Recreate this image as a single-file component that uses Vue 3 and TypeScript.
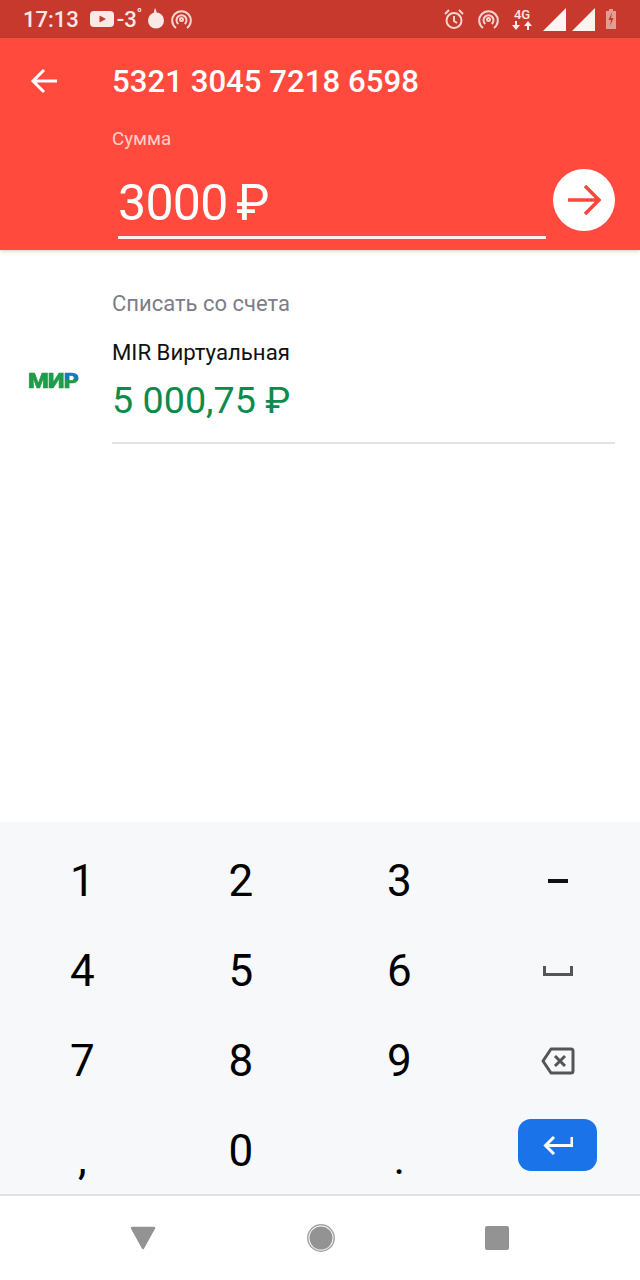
<script setup lang="ts">
const keys = ["1", "2", "3", "–", "4", "5", "6", "space", "7", "8", "9", "back", ",", "0", ".", "enter"];
</script>

<template>
  <div class="screen">
    <div class="status">
      <div class="status-left">
        <span class="time">17:13</span>
        <svg class="yt" width="24" height="16" viewBox="0 0 24 16">
          <rect width="24" height="16" rx="4" fill="#fbe9e7" />
          <path d="M9.5 4.5 16 8l-6.500 3.500z" fill="#c6392c" />
        </svg>
        <span class="temp">-3<sup>°</sup></span>
        <svg class="drop" width="18" height="22" viewBox="0 0 18 22">
          <path d="M8 1c1 2 1.500 3 1.600 5H6.800C7 4 7.500 3 8 1z" fill="#fbe9e7" />
          <circle cx="9" cy="13.500" r="8" fill="#fbe9e7" />
        </svg>
        <svg width="21" height="21" viewBox="0 0 21 21" fill="none" stroke="#f6d5d1" stroke-width="2">
          <path d="M5 19a9.300 9.300 0 1 1 11 0" />
          <path d="M7.300 15a5 5 0 1 1 6.400 0" />
          <circle cx="10.500" cy="10.500" r="1.500" />
        </svg>
      </div>
      <div class="status-right">
        <svg width="22" height="22" viewBox="0 0 22 22" fill="none" stroke="#f6d5d1" stroke-width="2">
          <circle cx="11" cy="12.500" r="7.500" />
          <path d="M11 8v5l3 2M2 6l4-4M20 6l-4-4" />
        </svg>
        <svg class="gap-icon" width="21" height="21" viewBox="0 0 21 21" fill="none" stroke="#f6d5d1" stroke-width="2">
          <path d="M5 19a9.300 9.300 0 1 1 11 0" />
          <path d="M7.300 15a5 5 0 1 1 6.400 0" />
          <circle cx="10.500" cy="10.500" r="1.500" />
        </svg>
        <div class="net">
          <span>4G</span>
          <svg width="20" height="9" viewBox="0 0 20 9" fill="#fbe9e7">
            <path d="M3 0h2v4h3L4 9 0 4h3zM15 9h2V5h3l-4-5-4 5h3z" />
          </svg>
        </div>
        <svg class="signal" width="23" height="23" viewBox="0 0 23 23"><path d="M23 0v23H0z" fill="#fdf3f1" /></svg>
        <svg class="signal second" width="23" height="23" viewBox="0 0 23 23"><path d="M23 0v23H0z" fill="#fdf3f1" /></svg>
        <svg class="battery" width="10" height="20" viewBox="0 0 10 20">
          <path d="M3 0h4v2h3v18H0V2h3z" fill="#e59c94" />
          <path d="M6 3 2.500 11H5l-1 6 3.500-8H5z" fill="#c6392c" />
        </svg>
      </div>
    </div>

    <header class="header">
      <div class="title-row">
        <svg class="back" width="28" height="26" viewBox="0 0 28 26" fill="none" stroke="#fff" stroke-width="3">
          <path d="M27 13H3M14 2 3 13l11 11" />
        </svg>
        <h1 class="title">5321 3045 7218 6598</h1>
      </div>
      <div class="amount-block">
        <div class="amount-label">Сумма</div>
        <div class="amount-row">
          <div class="amount-input">3000 ₽</div>
          <button class="go">
            <svg width="34" height="34" viewBox="0 0 34 34" fill="none" stroke="#f9483b" stroke-width="3.500">
              <path d="M1 17h30M18 3l14 14-14 14" />
            </svg>
          </button>
        </div>
      </div>
    </header>

    <main class="account">
      <div class="logo"><span class="mi">МИ</span><span class="r">Р</span></div>
      <div class="account-info">
        <div class="account-caption">Списать со счета</div>
        <div class="account-name">MIR Виртуальная</div>
        <div class="account-balance">5 000,75 ₽</div>
      </div>
    </main>

    <section class="keyboard">
      <div v-for="key in keys" :key="key" class="key">
        <svg v-if="key === 'space'" width="30" height="10" viewBox="0 0 30 10" fill="none" stroke="#555" stroke-width="3">
          <path d="M1.500 0v8.500h27V0" />
        </svg>
        <svg v-else-if="key === 'back'" width="34" height="28" viewBox="0 0 34 28" fill="none" stroke="#555" stroke-width="3">
          <path d="M10 2h20a2 2 0 0 1 2 2v20a2 2 0 0 1-2 2H10L2 14z" stroke-linejoin="round" />
          <path d="M14 9l10 10M24 9 14 19" />
        </svg>
        <div v-else-if="key === 'enter'" class="enter">
          <svg width="30" height="20" viewBox="0 0 30 20" fill="none" stroke="#fff" stroke-width="3">
            <path d="M29 2v8.500H3M11 2l-8.500 8.500L11 19" />
          </svg>
        </div>
        <span v-else-if="key === '–'" class="dash"></span>
        <span v-else :class="{ low: key === ',' || key === '.' }">{{ key }}</span>
      </div>
    </section>

    <nav class="nav">
      <svg width="26" height="24" viewBox="0 0 26 24"><path d="M2 2h22L13 22z" fill="#939393" stroke="#939393" stroke-width="2.500" stroke-linejoin="round" /></svg>
      <svg width="28" height="28" viewBox="0 0 28 28">
        <circle cx="14" cy="14" r="13.200" fill="none" stroke="#a5a5a5" stroke-width="1.500" />
        <circle cx="14" cy="14" r="11.500" fill="#939393" />
      </svg>
      <div class="square"></div>
    </nav>
  </div>
</template>

<style scoped>
.screen {
  width: 640px;
  height: 1280px;
  display: flex;
  flex-direction: column;
  background: #fff;
  font-family: Roboto, "Liberation Sans", sans-serif;
  overflow: hidden;
}

.status {
  height: 38px;
  flex-shrink: 0;
  display: flex;
  justify-content: space-between;
  align-items: center;
  background: #c6392c;
  color: #fbe9e7;
  padding: 0 24px 0 23px;
  box-sizing: border-box;
}

.status-left,
.status-right {
  display: flex;
  align-items: center;
}

.time {
  font-size: 22px;
  font-weight: 500;
  margin-right: 11px;
}

.temp {
  font-size: 22px;
  font-weight: 500;
  margin-left: 3px;
  margin-right: 5px;
}

.temp sup {
  font-size: 14px;
  line-height: 0;
}

.drop {
  margin-right: 6px;
  margin-top: -2px;
}

.gap-icon {
  margin-left: 13px;
}

.net {
  display: flex;
  flex-direction: column;
  align-items: center;
  margin-left: 13px;
  margin-right: 11px;
  font-size: 13px;
  font-weight: 500;
  line-height: 13px;
}

.signal.second {
  margin-left: 6px;
}

.battery {
  margin-left: 11px;
}

.header {
  height: 212px;
  flex-shrink: 0;
  background: #ff4a3d;
  color: #fff;
  box-shadow: 0 1px 4px rgba(0, 0, 0, 0.2);
  position: relative;
  padding-left: 30px;
  box-sizing: border-box;
}

.title-row {
  display: flex;
  align-items: center;
  height: 86px;
}

.back {
  margin-right: 54px;
}

.title {
  margin: 0;
  font-size: 31.200px;
  font-weight: 500;
}

.amount-block {
  margin-left: 82px;
}

.amount-label {
  font-size: 18.800px;
  line-height: 28px;
  color: #ffd0cc;
  margin-top: 1px;
}

.amount-row {
  display: flex;
  align-items: flex-start;
  margin-top: 16px;
}

.amount-input {
  width: 428px;
  margin-left: 6px;
  height: 70px;
  line-height: 68px;
  font-size: 50px;
  letter-spacing: -0.7px;
  word-spacing: -3px;
  border-bottom: 3px solid #fbf0ee;
  box-sizing: border-box;
}

.go {
  width: 62px;
  height: 62px;
  margin-left: 7px;
  padding: 0;
  border: none;
  border-radius: 50%;
  background: #fff;
  display: flex;
  align-items: center;
  justify-content: center;
}

.account {
  flex: 1;
  display: flex;
  padding: 40px 25px 0 28px;
}

.logo {
  width: 84px;
  flex-shrink: 0;
  height: 24px;
  margin-top: 79px;
  font-size: 20px;
  line-height: 24px;
  font-weight: 900;
  letter-spacing: -0.5px;
  color: #1f9c4a;
  -webkit-text-stroke: 0.6px #1f9c4a;
  transform: scaleX(1.18);
  transform-origin: left center;
}

.r {
  background: linear-gradient(180deg, #1878b8 45%, #1f9c4a 45%);
  -webkit-background-clip: text;
  background-clip: text;
  color: transparent;
  -webkit-text-stroke: 0.6px transparent;
}

.account-info {
  flex: 1;
  height: 154px;
  border-bottom: 2px solid #e3e3e3;
  box-sizing: border-box;
}

.account-caption {
  font-size: 22px;
  line-height: 28px;
  color: #7c7d88;
}

.account-name {
  margin-top: 20px;
  font-size: 22.200px;
  line-height: 28px;
  color: #111;
}

.account-balance {
  margin-top: 13px;
  font-size: 37.700px;
  line-height: 42px;
  color: #0d8b4b;
}

.keyboard {
  height: 374px;
  flex-shrink: 0;
  display: grid;
  grid-template-columns: repeat(4, 1fr);
  grid-template-rows: repeat(4, 90px);
  align-content: start;
  padding: 14px 3px 0;
  box-sizing: border-box;
  background: #f6f8fa;
  border-bottom: 2px solid #dfe1e3;
  font-size: 44px;
  color: #000;
}

.key {
  display: flex;
  align-items: center;
  justify-content: center;
}

.low {
  position: relative;
  top: 8px;
}

.dash {
  width: 20px;
  height: 4px;
  background: #111;
}

.enter {
  width: 79px;
  height: 52px;
  border-radius: 13px;
  background: #1a73e8;
  display: flex;
  align-items: center;
  justify-content: center;
  margin-top: -12px;
}

.nav {
  height: 84px;
  display: flex;
  flex-shrink: 0;
  align-items: center;
  justify-content: space-between;
  padding: 0 131px 0 130px;
  box-sizing: border-box;
}

.square {
  width: 24px;
  height: 24px;
  border-radius: 2px;
  background: #939393;
}
</style>
